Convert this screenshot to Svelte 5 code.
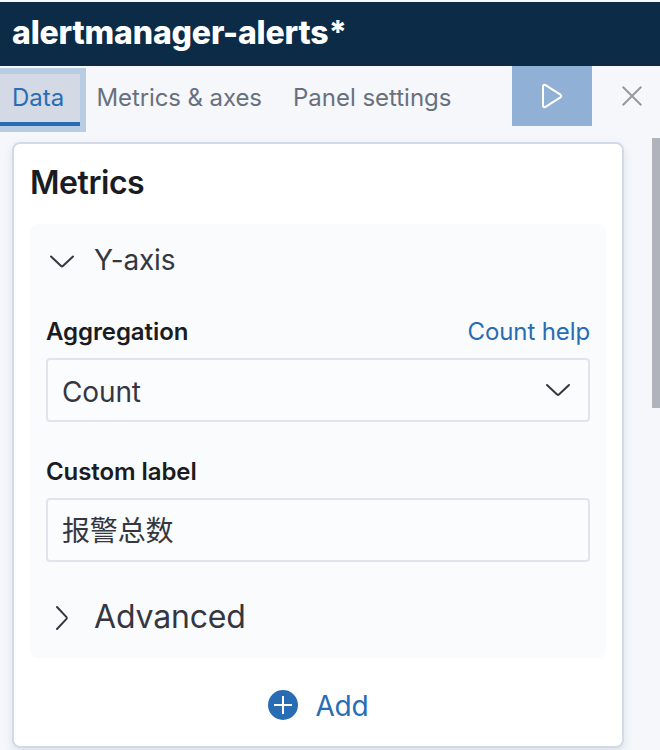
<script>
  let label = $state('报警总数');
</script>

<div class="sidebar">
  <header><h1>alertmanager-alerts*</h1></header>
  <nav>
    <button class="tab active">Data</button>
    <button class="tab axes">Metrics &amp; axes</button>
    <button class="tab settings">Panel settings</button>
    <button class="run" aria-label="Update">
      <svg width="32" height="32" viewBox="0 0 32 32" fill="none" stroke="#fff" stroke-width="2" stroke-linejoin="round"><path d="M8 6.400v19.200c0 1.400 1.300 2.100 2.500 1.300l15-9.600c1-.7 1-1.900 0-2.600l-15-9.600C9.300 4.300 8 5 8 6.400Z" /></svg>
    </button>
    <button class="close" aria-label="Close">
      <svg width="20" height="20" viewBox="0 0 20 20" fill="none" stroke="#98999d" stroke-width="2"><path d="M.7.7l18.600 18.600M19.300.7L.7 19.300" /></svg>
    </button>
  </nav>
  <div class="body">
    <section class="card">
      <h2>Metrics</h2>
      <div class="accordion">
        <button class="toggle">
          <svg width="32" height="32" viewBox="0 0 32 32" fill="none" stroke="#343741" stroke-width="2" stroke-linecap="round" stroke-linejoin="round"><path d="M5 11.500l10.100 9.500q.9.700 1.800 0L27 11.500" /></svg>
          <span class="yaxis">Y-axis</span>
        </button>
        <div class="labels"><span class="label">Aggregation</span><a href="#help">Count help</a></div>
        <div class="field">
          <span class="value">Count</span>
          <svg width="32" height="32" viewBox="0 0 32 32" fill="none" stroke="#343741" stroke-width="2" stroke-linecap="round" stroke-linejoin="round"><path d="M5 10l10.100 9.500q.9.700 1.800 0L27 10" /></svg>
        </div>
        <div class="labels"><span class="label">Custom label</span></div>
        <div class="field"><span class="cjk">{label}</span></div>
        <button class="toggle advanced">
          <svg width="32" height="32" viewBox="0 0 32 32" fill="none" stroke="#343741" stroke-width="2" stroke-linecap="round" stroke-linejoin="round"><path d="M11 6l9.500 10.100q.7.900 0 1.800L11 28" /></svg>
          <span>Advanced</span>
        </button>
      </div>
      <button class="add">
        <svg width="30" height="30" viewBox="0 0 30 30"><circle cx="15" cy="15" r="15" fill="#286db4" /><path d="M15 6v18M6 15h18" stroke="#fff" stroke-width="2" /></svg>
        <span>Add</span>
      </button>
    </section>
    <div class="scrollbar"></div>
  </div>
</div>

<style>
  .sidebar {
    box-sizing: border-box;
    width: 660px;
    height: 750px;
    padding-top: 2px;
    overflow: hidden;
    display: flex;
    flex-direction: column;
    background: #f5f7fb;
    color: #343741;
    font-family: Inter, "Noto Sans CJK SC", sans-serif;
  }
  .sidebar * { box-sizing: border-box; }
  button {
    margin: 0;
    padding: 0;
    border: 0;
    background: none;
    font: inherit;
    color: inherit;
    text-align: left;
  }
  svg { display: block; flex: none; }
  header {
    flex: none;
    height: 64px;
    padding-left: 12px;
    background: #0b2b46;
    color: #fff;
  }
  h1 {
    margin: 0;
    font-size: 32px;
    line-height: 62px;
    font-weight: 800;
    letter-spacing: -0.17px;
  }
  nav { flex: none; display: flex; height: 60px; }
  .tab {
    align-self: flex-end;
    height: 52px;
    padding-bottom: 4px;
    line-height: 46px;
    font-size: 24px;
    letter-spacing: -0.1px;
    color: #69707d;
    white-space: nowrap;
  }
  .active {
    width: 80px;
    padding: 0 0 0 12px;
    background: #d3d9e5;
    color: #286db4;
    border-bottom: 4px solid #286db4;
    box-shadow: 0 0 0 6px #b8cde4;
    letter-spacing: 0;
  }
  .axes { width: 196px; padding-left: 16.5px; }
  .settings { width: 236px; padding-left: 17px; letter-spacing: -0.02px; }
  .run { width: 80px; height: 60px; padding: 0 0 0 23px; background: #90b0d6; }
  .close { padding: 0 0 0 30px; }
  .body { flex: 1; display: flex; padding: 16px 0 0 12px; justify-content: space-between; }
  .card {
    width: 612px;
    height: 606px;
    padding: 16px;
    background: #fff;
    border: 2px solid #d3dae6;
    border-radius: 8px;
    box-shadow: 0 4px 10px rgba(90, 110, 150, .16);
  }
  h2 {
    margin: 0;
    height: 64px;
    line-height: 46px;
    font-size: 32px;
    font-weight: 600;
    letter-spacing: -0.45px;
    color: #1a1c21;
  }
  .accordion { height: 434px; padding: 16px; border-radius: 8px; background: #fafbfd; }
  .toggle { display: flex; align-items: center; gap: 16px; height: 42px; font-size: 28px; letter-spacing: -0.14px; }
  .yaxis { padding-bottom: 2px; }
  .labels {
    display: flex;
    justify-content: space-between;
    height: 44px;
    margin-top: 32px;
    line-height: 36px;
    font-size: 24px;
    letter-spacing: -0.12px;
  }
  .label { font-weight: 600; color: #1a1c21; letter-spacing: -0.08px; }
  a { color: #286db4; text-decoration: none; }
  .field {
    display: flex;
    align-items: center;
    justify-content: space-between;
    height: 64px;
    padding: 2px 14px 0;
    border: 2px solid #e1e4ee;
    border-radius: 4px;
    background: #fbfcfd;
    font-size: 28px;
    letter-spacing: -0.14px;
  }
  .value { padding-top: 2px; }
  .cjk { padding-bottom: 4px; }
  .advanced { margin-top: 34px; font-size: 32px; letter-spacing: -0.16px; }
  .advanced span { padding-bottom: 2px; }
  .add {
    display: flex;
    align-items: center;
    gap: 17px;
    margin: 30px auto 0;
    height: 36px;
    color: #286db4;
    font-size: 28px;
    letter-spacing: -0.14px;
  }
  .add svg { margin: 0 0 2px 1px; }
  .scrollbar { width: 8px; height: 270px; margin-top: -4px; background: #b0b2bc; }
</style>
